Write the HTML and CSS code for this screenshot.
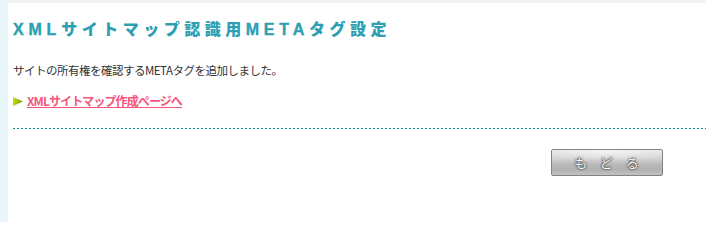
FILE: index.html
```html
<!DOCTYPE html>
<html lang="ja">
<head>
<meta charset="utf-8">
<title>XMLサイトマップ認識用METAタグ設定</title>
<link rel="stylesheet" href="styles.css">
</head>
<body>
<div class="page">
  <h1 class="title"><span class="lat">XML</span>サイトマップ認識用<span class="lat">META</span>タグ設定</h1>
  <p class="msg">サイトの所有権を確認するMETAタグを追加しました。</p>
  <p class="linkrow">
    <svg class="arrow" width="10" height="9" viewBox="0 0 10 9" aria-hidden="true">
      <defs>
        <linearGradient id="ag" x1="0" y1="0" x2="1" y2="0">
          <stop offset="0" stop-color="#c8e000"/>
          <stop offset="1" stop-color="#6a9a00"/>
        </linearGradient>
      </defs>
      <polygon points="0,0 10,4.5 0,9" fill="url(#ag)"/>
    </svg>
    <a class="link" href="#">XMLサイトマップ作成ページへ</a>
  </p>
  <div class="rule"></div>
  <div class="actions">
    <button class="back" type="button">もどる</button>
  </div>
</div>
</body>
</html>
```

FILE: styles.css
```css
html, body {
  margin: 0;
  padding: 0;
  background: #ffffff;
}
body {
  font-family: "Noto Sans CJK JP", "Liberation Sans", sans-serif;
}
.page {
  box-sizing: border-box;
  min-height: 222px;
  margin-right: 1px;
  border-top: 3px solid #f1f4f6;
  border-left: 8px solid #e9f6f9;
  padding-left: 5px;
}
.title {
  margin: 15px 0 0 0;
  font-size: 16px;
  line-height: 20px;
  font-weight: 900;
  color: #2e9fb3;
  letter-spacing: 4.5px;
}
.title .lat {
  font-family: "Liberation Sans", sans-serif;
  font-weight: bold;
  letter-spacing: 4.8px;
  -webkit-text-stroke: 0.4px #2e9fb3;
}
.msg {
  margin: 22px 0 0 0;
  font-size: 11.5px;
  line-height: 16px;
  color: #333333;
  letter-spacing: -0.5px;
}
.linkrow {
  margin: 15px 0 0 0;
  display: flex;
  align-items: center;
  gap: 4px;
  font-size: 12px;
  line-height: 16px;
}
.arrow {
  display: block;
  flex: none;
}
.link {
  color: #f6557a;
  font-weight: bold;
  text-decoration: underline;
  letter-spacing: -0.9px;
}
.rule {
  margin-top: 19px;
  height: 1px;
  background-image: repeating-linear-gradient(to right, #0f8896 0 2px, transparent 2px 4px);
}
.actions {
  display: flex;
  justify-content: flex-end;
  padding-right: 43px;
  margin-top: 20px;
}
.back {
  box-sizing: border-box;
  width: 112px;
  height: 27px;
  border: 1px solid #838383;
  border-radius: 2px;
  padding: 0 0 0 12px;
  font-family: "Noto Sans CJK JP", sans-serif;
  font-size: 13px;
  color: #ffffff;
  letter-spacing: 13px;
  text-shadow: 0 0 1px #333, 0 0 2px #444, 0 0 3px #555;
  background:
    radial-gradient(ellipse 95% 55% at 50% 5%, rgba(255,255,255,0.6), rgba(255,255,255,0) 75%),
    linear-gradient(#e4e4e4 0%, #d2d2d2 35%, #b8b8b8 60%, #b2b2b2 80%, #c2c2c2 100%);
  cursor: pointer;
}
```
